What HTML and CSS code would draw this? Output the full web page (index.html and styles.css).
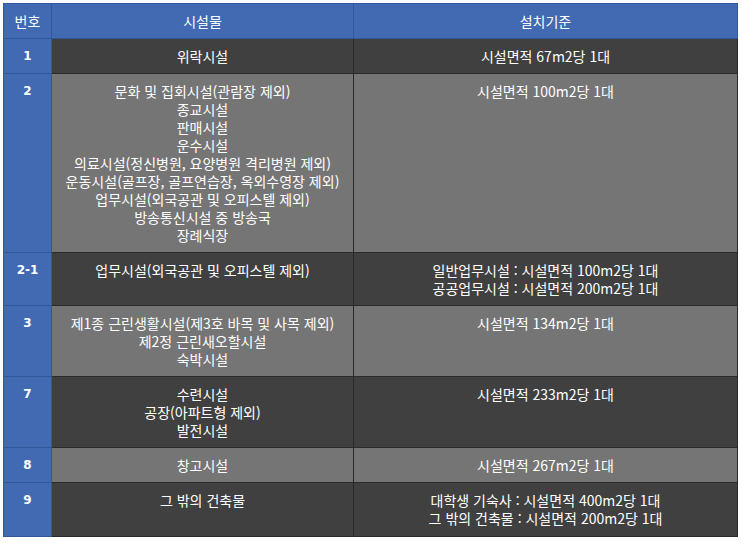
FILE: index.html
```html
<!DOCTYPE html>
<html lang="ko">
<head>
<meta charset="utf-8">
<link rel="stylesheet" href="styles.css">
</head>
<body>
<table class="tbl">
  <colgroup>
    <col class="c-no">
    <col class="c-fac">
    <col class="c-std">
  </colgroup>
  <thead>
    <tr class="head">
      <th>번호</th>
      <th>시설물</th>
      <th>설치기준</th>
    </tr>
  </thead>
  <tbody>
    <tr class="dark h35">
      <td class="no">1</td>
      <td>위락시설</td>
      <td>시설면적 67m2당 1대</td>
    </tr>
    <tr class="gray">
      <td class="no">2</td>
      <td>문화 및 집회시설(관람장 제외)<br>종교시설<br>판매시설<br>운수시설<br>의료시설(정신병원, 요양병원 격리병원 제외)<br>운동시설(골프장, 골프연습장, 옥외수영장 제외)<br>업무시설(외국공관 및 오피스텔 제외)<br>방송통신시설 중 방송국<br>장례식장</td>
      <td>시설면적 100m2당 1대</td>
    </tr>
    <tr class="dark">
      <td class="no">2-1</td>
      <td>업무시설(외국공관 및 오피스텔 제외)</td>
      <td>일반업무시설 : 시설면적 100m2당 1대<br>공공업무시설 : 시설면적 200m2당 1대</td>
    </tr>
    <tr class="gray">
      <td class="no">3</td>
      <td>제1종 근린생활시설(제3호 바목 및 사목 제외)<br>제2정 근린새오할시설<br>숙박시설</td>
      <td>시설면적 134m2당 1대</td>
    </tr>
    <tr class="dark">
      <td class="no">7</td>
      <td>수련시설<br>공장(아파트형 제외)<br>발전시설</td>
      <td>시설면적 233m2당 1대</td>
    </tr>
    <tr class="gray h35">
      <td class="no">8</td>
      <td>창고시설</td>
      <td>시설면적 267m2당 1대</td>
    </tr>
    <tr class="dark last">
      <td class="no">9</td>
      <td>그 밖의 건축물</td>
      <td>대학생 기숙사 : 시설면적 400m2당 1대<br>그 밖의 건축물 : 시설면적 200m2당 1대</td>
    </tr>
  </tbody>
</table>
</body>
</html>
```

FILE: styles.css
```css
html, body {
  margin: 0;
  padding: 0;
  background: #ffffff;
}
body {
  padding: 3px;
  font-family: "Noto Sans CJK KR", "Noto Sans", sans-serif;
  font-size: 14px;
  color: #ffffff;
}
.tbl {
  border-collapse: collapse;
  width: 735px;
  table-layout: fixed;
  border: 1px solid #2f4f8a;
}
.c-no { width: 48px; }
.c-fac { width: 302px; }
.c-std { width: auto; }
.tbl th, .tbl td {
  padding: 8px 4px;
  line-height: 18px;
  text-align: center;
  vertical-align: top;
  font-weight: normal;
  border: 1px solid #2a2a2a;
}
.head th {
  background: #416ab3;
  border-color: #30579a;
  height: 18px;
}
.h35 td { height: 18px; }
.dark td { background: #404040; }
.gray td { background: #757575; }
.tbl td.no {
  background: #416ab3;
  border-color: #30579a;
  font-weight: bold;
  font-family: "DejaVu Sans", "Noto Sans CJK KR", sans-serif;
  font-size: 12px;
}
.last td { padding-bottom: 9px; }
```
